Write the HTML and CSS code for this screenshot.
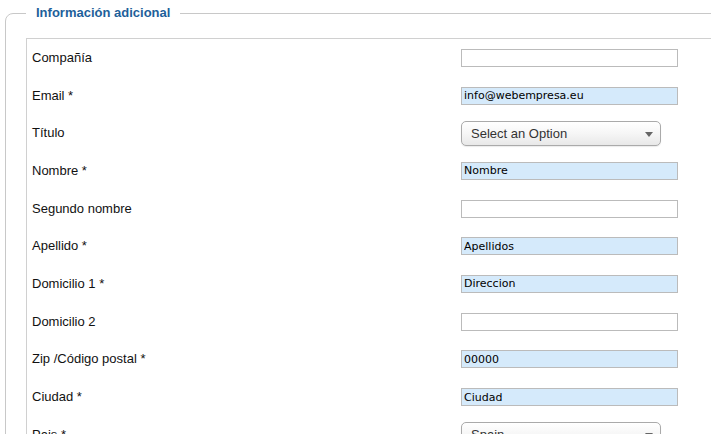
FILE: index.html
```html
<!DOCTYPE html>
<html lang="es">
<head>
  <meta charset="UTF-8" />
  <title>Información adicional</title>
  <link rel="stylesheet" href="styles.css">
</head>
<body>
  <fieldset class="extra">
    <legend>Información adicional</legend>
    <div class="fields">
      <label>Compañía</label>
      <input type="text" class="plain" value="" />

      <label>Email *</label>
      <input type="text" value="info@webempresa.eu" />

      <label>Título</label>
      <div class="select-wrap">
        <select><option>Select an Option</option></select>
        <span class="arrow"></span>
      </div>

      <label>Nombre *</label>
      <input type="text" value="Nombre" />

      <label>Segundo nombre</label>
      <input type="text" class="plain" value="" />

      <label>Apellido *</label>
      <input type="text" value="Apellidos" />

      <label>Domicilio 1 *</label>
      <input type="text" value="Direccion" />

      <label>Domicilio 2</label>
      <input type="text" class="plain" value="" />

      <label>Zip /Código postal *</label>
      <input type="text" value="00000" />

      <label>Ciudad *</label>
      <input type="text" value="Ciudad" />

      <label>Pais *</label>
      <div class="select-wrap">
        <select><option>Spain</option></select>
        <span class="arrow"></span>
      </div>
    </div>
  </fieldset>
</body>
</html>
```

FILE: styles.css
```css
html, body {
  margin: 0;
  overflow: hidden;
  background: #fff;
}

body {
  font-family: "Liberation Sans", Arial, Helvetica, sans-serif;
  font-size: 13px;
  color: #111;
}

.extra {
  width: 900px;
  margin: 5px 0 0 5px;
  padding: 17px 0 0 20px;
  border: 1px solid #c8c8c8;
  border-radius: 8px 0 0 0;
  min-height: 600px;
}

.extra legend {
  padding: 0 10px;
  font-size: 13px;
  font-weight: bold;
  line-height: 16px;
  color: #1e5f9a;
}

.fields {
  display: grid;
  grid-template-columns: 429px 217px;
  grid-auto-rows: 37.7px;
  align-items: center;
  padding-left: 5px;
  border: 1px solid #d0d0d0;
  border-right: none;
  min-height: 600px;
  align-content: start;
}

.fields label {
  line-height: 16px;
}

.fields input {
  box-sizing: border-box;
  width: 217px;
  height: 18px;
  margin: 0;
  padding: 0 2px;
  border: 1px solid #bbb;
  background: #d5eafb;
  font-family: "DejaVu Sans", Verdana, sans-serif;
  font-size: 11px;
  color: #000;
  outline: none;
}

.fields input.plain {
  background: #fff;
}

.select-wrap {
  position: relative;
  width: 200px;
  height: 25px;
}

.select-wrap select {
  appearance: none;
  -webkit-appearance: none;
  box-sizing: border-box;
  width: 200px;
  height: 25px;
  margin: 0;
  padding: 0 0 0 9px;
  border: 1px solid #aaa;
  border-radius: 5px;
  background: linear-gradient(#ffffff, #f6f6f6 50%, #e8e8e8);
  font-family: "Liberation Sans", Arial, sans-serif;
  font-size: 13px;
  color: #333;
  box-shadow: 0 1px 1px rgba(0, 0, 0, 0.08);
}

.select-wrap .arrow {
  position: absolute;
  right: 8px;
  top: 11px;
  width: 0;
  height: 0;
  border-left: 4px solid transparent;
  border-right: 4px solid transparent;
  border-top: 5px solid #666;
}
```
